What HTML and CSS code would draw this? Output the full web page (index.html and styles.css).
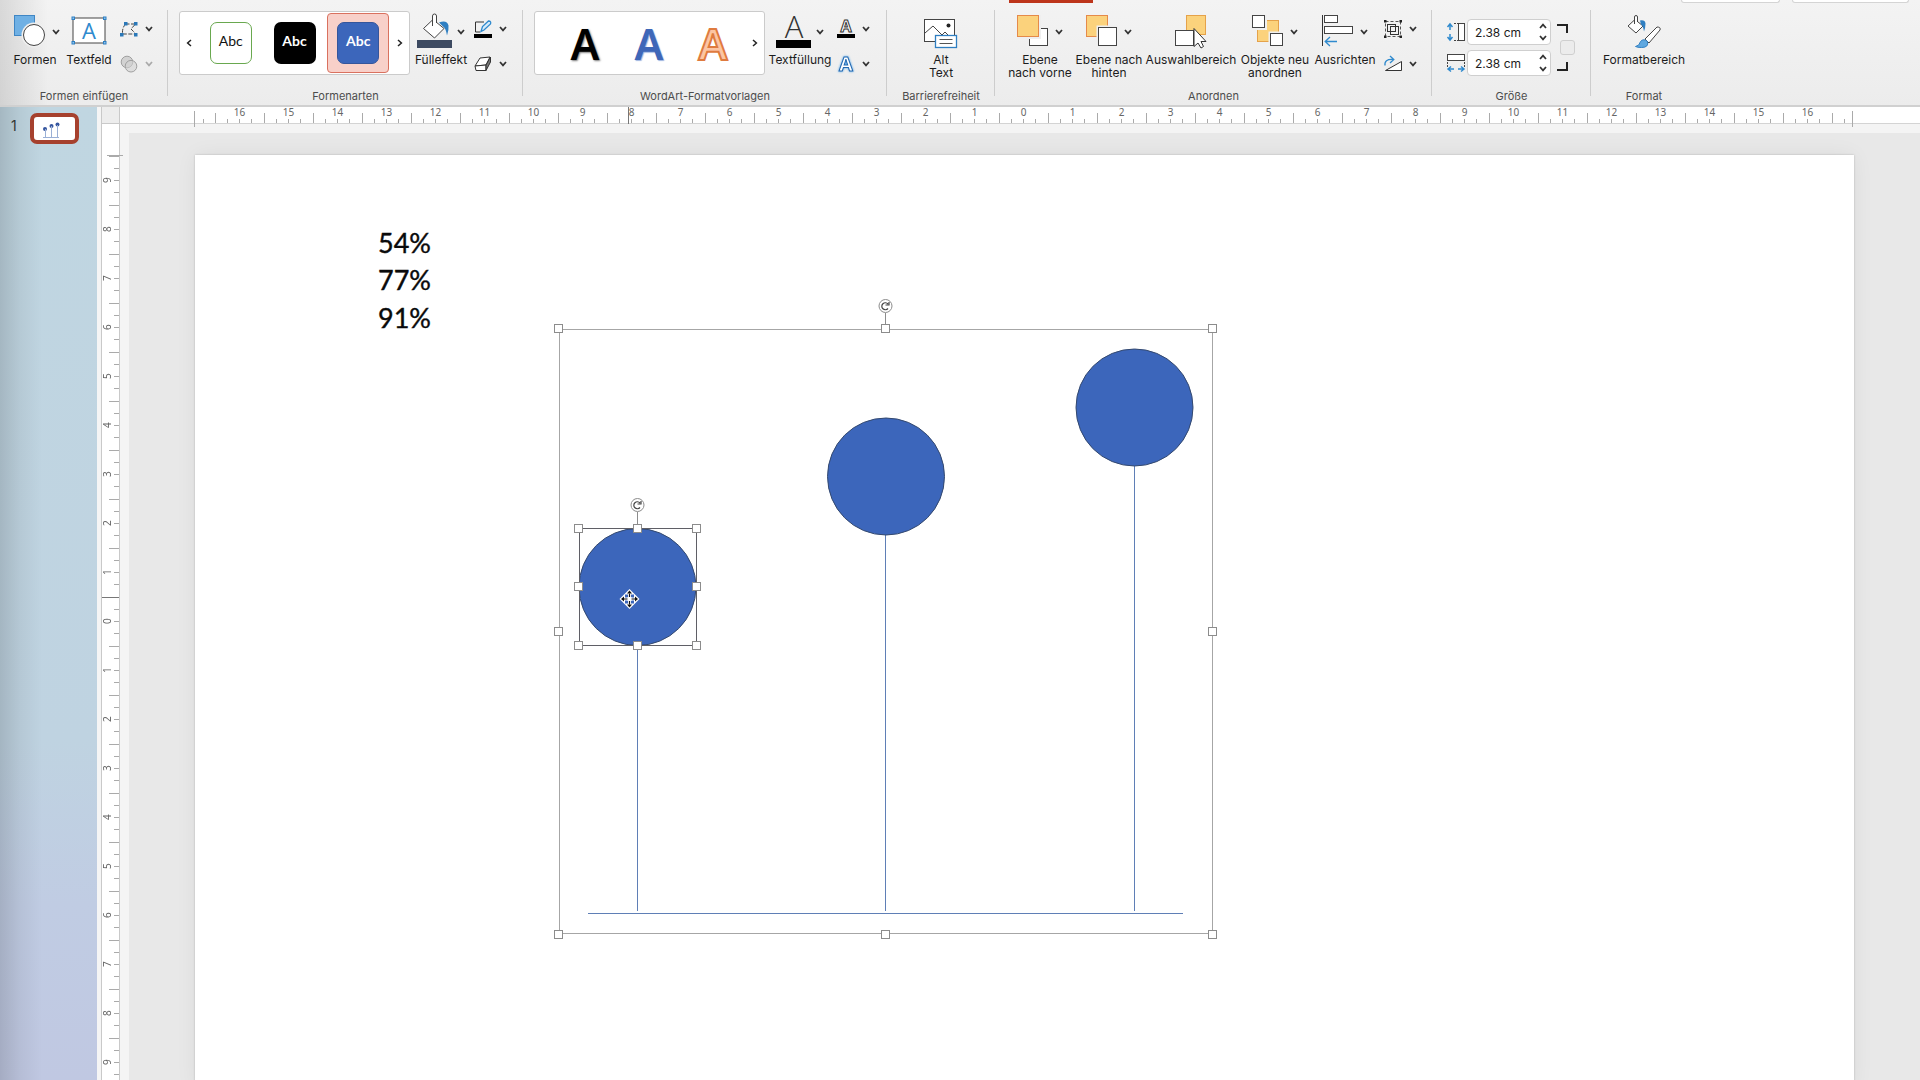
FILE: index.html
```
<!DOCTYPE html>
<html lang="de">
<head>
<meta charset="utf-8">
<title>Präsentation</title>
<link rel="stylesheet" href="styles.css">
</head>
<body>
<svg width="0" height="0" class="defs" aria-hidden="true">
  <symbol id="down" viewBox="0 0 8 6"><path d="M1 1l3 3.400 3-3.400" fill="none" stroke="currentColor" stroke-width="1.700"/></symbol>
  <symbol id="up" viewBox="0 0 8 6"><path d="M1 5l3-3.400 3 3.400" fill="none" stroke="currentColor" stroke-width="1.700"/></symbol>
  <symbol id="left" viewBox="0 0 6 8"><path d="M5 1l-3.400 3 3.400 3" fill="none" stroke="currentColor" stroke-width="1.500"/></symbol>
  <symbol id="right" viewBox="0 0 6 8"><path d="M1 1l3.400 3-3.400 3" fill="none" stroke="currentColor" stroke-width="1.500"/></symbol>
</svg>

<header class="ribbon">
  <div class="tab-mark"></div>
  <div class="top-fields"><span></span><span></span></div>

  <section class="group g-insert">
    <div class="tools">
      <button class="tool w50">
        <span class="pic end"><svg width="31" height="36"><rect x=".5" y="1.500" width="20" height="20" fill="#6fb0e4" stroke="#3f86c4"/><circle cx="20" cy="21" r="12.500" fill="#efefef"/><circle cx="20" cy="21" r="10.500" fill="#fff" stroke="#444"/></svg><svg class="chev"><use href="#down"/></svg></span>
        <span class="name">Formen</span>
      </button>
      <button class="tool w50">
        <span class="pic"><svg width="36" height="36"><rect x="2" y="4" width="32" height="25" fill="#fff" stroke="#444"/><g fill="#8cc4ee" stroke="#2f7fc2"><rect x="1" y="3" width="2.500" height="2.500"/><rect x="32.500" y="3" width="2.500" height="2.500"/><rect x="1" y="27.500" width="2.500" height="2.500"/><rect x="32.500" y="27.500" width="2.500" height="2.500"/></g><text x="18" y="24.500" class="t-box">A</text></svg></span>
        <span class="name">Textfeld</span>
      </button>
      <div class="minis">
        <button class="mini" aria-label="Form bearbeiten"><svg width="18" height="18"><path d="M5.500 4h10L11 9l5 5H2.500Q2 8 5.500 4" fill="none" stroke="#444" stroke-dasharray="4 1.500"/><g fill="#2b78b8"><rect x="4" y="2" width="3.500" height="3.500"/><rect x="14" y="2" width="3.500" height="3.500"/><rect x="0" y="13" width="3.500" height="3.500"/><rect x="14" y="13" width="3.500" height="3.500"/></g></svg><svg class="chev"><use href="#down"/></svg></button>
        <button class="mini" disabled aria-label="Formen zusammenführen"><svg width="18" height="18"><g fill="#d2d2d2" stroke="#a0a0a0"><circle cx="7" cy="7" r="5.800"/><circle cx="11" cy="11.200" r="5.800" fill="#d2d2d299"/></g></svg><svg class="chev"><use href="#down"/></svg></button>
      </div>
    </div>
    <h2>Formen einfügen</h2>
  </section>

  <section class="group g-styles">
    <div class="tools">
      <div class="gallery">
        <button class="arrow" aria-label="Zurück"><svg width="6" height="8"><use href="#left"/></svg></button>
        <button class="cell"><span class="swatch outline">Abc</span></button>
        <button class="cell"><span class="swatch black">Abc</span></button>
        <button class="cell selected"><span class="swatch blue">Abc</span></button>
        <button class="arrow" aria-label="Weiter"><svg width="6" height="8"><use href="#right"/></svg></button>
      </div>
      <button class="tool w54">
        <span class="pic tight"><svg width="36" height="36"><path d="M6.500 14.500L16 5.500l11 9-9.500 9.500z" fill="#fff" stroke="#444"/><path d="M15.500 12V2q0-2 2-2t2 2v7" fill="#fff" stroke="#444"/><path d="M22 8.500q8-3 9.500 3 .5 4-1.500 10-1-7-4-9z" fill="#2f7fc2"/><rect x="0" y="26" width="35" height="8" fill="#3d4a61"/></svg><svg class="chev"><use href="#down"/></svg></span>
        <span class="name">Fülleffekt</span>
      </button>
      <div class="minis">
        <button class="mini" aria-label="Formkontur"><svg width="18" height="18"><path d="M10 2H1.500v10" fill="none" stroke="#333"/><path d="M1.500 12H6" stroke="#333"/><path d="M7 11.500l1.500-5L14.500 1q3 0 2 3L10 10z" fill="#d7ebfa" stroke="#2f8ace" stroke-width="1.300"/><rect y="14" width="18" height="4" fill="#000"/></svg><svg class="chev"><use href="#down"/></svg></button>
        <button class="mini" aria-label="Formeffekte"><svg width="18" height="18"><path d="M1 11L6 3l10-1-4 8z" fill="#fff" stroke="#333"/><path d="M1 11l11-1v5.500H2z" fill="#fff" stroke="#333"/><path d="M12 10l4.500-8v5L12 15.500z" fill="#777" stroke="#333"/></svg><svg class="chev"><use href="#down"/></svg></button>
      </div>
    </div>
    <h2>Formenarten</h2>
  </section>

  <section class="group g-wordart">
    <div class="tools">
      <div class="gallery no-back">
        <button class="cell"><span class="art art-black">A</span></button>
        <button class="cell"><span class="art art-blue">A</span></button>
        <button class="cell"><span class="art art-orange">A</span></button>
        <button class="arrow" aria-label="Weiter"><svg width="6" height="8"><use href="#right"/></svg></button>
      </div>
      <button class="tool w62">
        <span class="pic tight"><svg width="36" height="36"><text x="18" y="24" class="t-fill">A</text><rect x="0" y="26" width="35" height="8" fill="#000"/></svg><svg class="chev"><use href="#down"/></svg></span>
        <span class="name">Textfüllung</span>
      </button>
      <div class="minis">
        <button class="mini" aria-label="Textkontur"><svg width="18" height="18"><text x="9" y="12" class="t-line">A</text><rect y="14" width="18" height="4" fill="#000"/></svg><svg class="chev"><use href="#down"/></svg></button>
        <button class="mini" aria-label="Texteffekte"><svg width="18" height="18"><text x="9" y="16" class="t-glow">A</text></svg><svg class="chev"><use href="#down"/></svg></button>
      </div>
    </div>
    <h2>WordArt-Formatvorlagen</h2>
  </section>

  <section class="group g-alt">
    <div class="tools">
      <button class="tool w62">
        <span class="pic"><svg width="34" height="36"><rect x=".5" y="5.500" width="30" height="22" fill="#fff" stroke="#444"/><path d="M1 19l8-7 9 9 3-3 4 4" fill="none" stroke="#444"/><circle cx="24.500" cy="11.500" r="2" fill="#222"/><rect x="11.500" y="21.500" width="21" height="12" fill="#fff" stroke="#2f7fc2" stroke-width="1.300"/><path d="M15.500 25.500h13M15.500 29.500h13" stroke="#555"/></svg></span>
        <span class="name">Alt<br>Text</span>
      </button>
    </div>
    <h2>Barrierefreiheit</h2>
  </section>

  <section class="group g-arrange">
    <div class="tools">
      <button class="tool w62">
        <span class="pic"><svg width="31" height="36"><rect x="12.500" y="14.500" width="18" height="17" fill="#fff" stroke="#444"/><rect x="0" y="1" width="24" height="24" fill="#efefef"/><rect x=".5" y="1.500" width="21" height="21" fill="#fbd27c" stroke="#e58a4a"/></svg><svg class="chev"><use href="#down"/></svg></span>
        <span class="name">Ebene<br>nach vorne</span>
      </button>
      <button class="tool w62">
        <span class="pic"><svg width="31" height="36"><rect x=".5" y="1.500" width="21" height="21" fill="#fbd27c" stroke="#e58a4a"/><rect x="10.500" y="11.500" width="21" height="22" fill="#efefef"/><rect x="12.500" y="13.500" width="18" height="18" fill="#fff" stroke="#444"/></svg><svg class="chev"><use href="#down"/></svg></span>
        <span class="name">Ebene nach<br>hinten</span>
      </button>
      <button class="tool w88">
        <span class="pic"><svg width="32" height="36"><rect x="11.500" y="1.500" width="19" height="19" fill="#fbd27c" stroke="#e5a24a"/><rect x=".5" y="16.500" width="18" height="15" fill="#fff" stroke="#444"/><path d="M19 14.500v18l4-3.500 3 5 2.500-1.500-2.500-5h5z" fill="#fff" stroke="#333"/></svg></span>
        <span class="name">Auswahlbereich</span>
      </button>
      <button class="tool w66">
        <span class="pic"><svg width="31" height="36"><rect x="5.500" y="6.500" width="21" height="21" fill="#fbd27c" stroke="#e5a24a"/><rect x="-1" y="1" width="16" height="15" fill="#efefef"/><rect x=".5" y="1.500" width="12" height="12" fill="#fff" stroke="#444"/><rect x="16.500" y="17.500" width="14" height="14" fill="#efefef"/><rect x="18.500" y="19.500" width="12" height="12" fill="#fff" stroke="#444"/></svg><svg class="chev"><use href="#down"/></svg></span>
        <span class="name">Objekte neu<br>anordnen</span>
      </button>
      <button class="tool w60">
        <span class="pic"><svg width="31" height="36"><path d="M.5 1v31" stroke="#333"/><rect x="2.500" y="1.500" width="13" height="7" fill="#fff" stroke="#444"/><rect x="2.500" y="12.500" width="28" height="7" fill="#fff" stroke="#444"/><path d="M15 27.500H3.500M8 23l-4.800 4.500L8 32" fill="none" stroke="#2f8ace" stroke-width="1.300"/></svg><svg class="chev"><use href="#down"/></svg></span>
        <span class="name">Ausrichten</span>
      </button>
      <div class="minis">
        <button class="mini" aria-label="Gruppieren"><svg width="18" height="18"><rect x="1.500" y="1.500" width="15" height="15" fill="none" stroke="#555" stroke-dasharray="3 2"/><rect x="3.500" y="4.500" width="8" height="7" fill="none" stroke="#333"/><rect x="6.500" y="6.500" width="8" height="8" fill="none" stroke="#333"/><path d="M0 0h2.500v2.500H0zM15.500 0H18v2.500h-2.500zM0 15.500h2.500V18H0zM15.500 15.500H18V18h-2.500z" fill="#222"/></svg><svg class="chev"><use href="#down"/></svg></button>
        <button class="mini" aria-label="Drehen"><svg width="18" height="18"><path d="M1.500 15.500h16v-9z" fill="#fff" stroke="#333"/><path d="M1 10.500Q0 4 9 4.500M6 1l3.800 3.500L6 8" fill="none" stroke="#2f8ace" stroke-width="1.300"/></svg><svg class="chev"><use href="#down"/></svg></button>
      </div>
    </div>
    <h2>Anordnen</h2>
  </section>

  <section class="group g-size">
    <div class="tools">
      <div class="sizes">
        <div class="size">
          <label for="h" aria-label="Höhe"><svg width="18" height="18"><path d="M3 1v6M.500 4L3 1l2.500 3M3 17v-6M.500 14L3 17l2.500-3" fill="none" stroke="#2f8ace" stroke-width="1.500"/><path d="M7 .500h5M7 17.500h5" stroke="#444" stroke-dasharray="2 1"/><rect x="11.500" y=".5" width="6" height="17" fill="#fff" stroke="#444"/></svg></label>
          <div class="spin"><input id="h" type="text" value="2.38 cm"><span class="steps"><button aria-label="Höher"><svg class="chev"><use href="#up"/></svg></button><button aria-label="Niedriger"><svg class="chev"><use href="#down"/></svg></button></span></div>
        </div>
        <div class="size">
          <label for="w" aria-label="Breite"><svg width="18" height="18"><rect x=".5" y=".5" width="17" height="6" fill="#fff" stroke="#444"/><path d="M.5 8v5M17.500 8v5" stroke="#444" stroke-dasharray="2 1"/><path d="M7 15H1M4 12.500L1 15l3 2.500M11 15h6M14 12.500l3 2.500-3 2.500" fill="none" stroke="#2f8ace" stroke-width="1.500"/></svg></label>
          <div class="spin"><input id="w" type="text" value="2.38 cm"><span class="steps"><button aria-label="Breiter"><svg class="chev"><use href="#up"/></svg></button><button aria-label="Schmaler"><svg class="chev"><use href="#down"/></svg></button></span></div>
        </div>
      </div>
      <div class="ratio">
        <svg width="11" height="9"><path d="M0 1h10v8" fill="none" stroke="#222" stroke-width="2"/></svg>
        <input type="checkbox" aria-label="Seitenverhältnis sperren">
        <svg width="11" height="9"><path d="M0 8h10V0" fill="none" stroke="#222" stroke-width="2"/></svg>
      </div>
    </div>
    <h2>Größe</h2>
  </section>

  <section class="group g-format">
    <div class="tools">
      <button class="tool w88">
        <span class="pic"><svg width="34" height="36"><path d="M1 12l7-6.500 8 6.500-7 7z" fill="#fff" stroke="#444"/><path d="M7.500 10V3q0-1.500 1.500-1.500T10.500 3v5" fill="#fff" stroke="#444"/><path d="M13 6.500q5-1 5.500 3 0 4-1.500 8-1-6-3-7z" fill="#2f7fc2"/><path d="M18 25L30 13q4 0 3 3L22 29z" fill="#fff" stroke="#444"/><path d="M8.500 32.500q4-.5 5-5 3-3.500 7 0 1.500 6-6 6-4 0-6-1z" fill="#5fa8e0" stroke="#2f7fc2"/></svg></span>
        <span class="name">Formatbereich</span>
      </button>
    </div>
    <h2>Format</h2>
  </section>
</header>

<main class="editor">
  <nav class="slides">
    <ol><li><a href="#slide"><span class="num">1</span><span class="thumb"><svg width="41" height="23"><g fill="#35559f"><circle cx="11" cy="12" r="2"/><circle cx="17.500" cy="9" r="2"/><circle cx="23.500" cy="7.500" r="2"/></g><path d="M11.500 12v8.500M17.500 9v11.500M23.500 8v12.500M9 20.500h16" stroke="#9ab0d6"/></svg></span></a></li></ol>
  </nav>
  <div class="corner"></div>
  <div class="ruler-h">
    <i class="pad"></i><span>16</span><span>15</span><span>14</span><span>13</span><span>12</span><span>11</span><span>10</span><span>9</span><span>8</span><span>7</span><span>6</span><span>5</span><span>4</span><span>3</span><span>2</span><span>1</span><span>0</span><span>1</span><span>2</span><span>3</span><span>4</span><span>5</span><span>6</span><span>7</span><span>8</span><span>9</span><span>10</span><span>11</span><span>12</span><span>13</span><span>14</span><span>15</span><span>16</span><i class="pad last"></i>
    <b class="pointer"></b>
  </div>
  <div class="ruler-v">
    <i class="pad"></i><span>9</span><span>8</span><span>7</span><span>6</span><span>5</span><span>4</span><span>3</span><span>2</span><span>1</span><span>0</span><span>1</span><span>2</span><span>3</span><span>4</span><span>5</span><span>6</span><span>7</span><span>8</span><span>9</span>
    <b class="pointer"></b>
  </div>
  <div class="workspace">
    <article class="slide" id="slide">
      <svg viewBox="0 0 1659 933">
        <defs>
          <rect id="handle" x="-4" y="-4" width="8" height="8" fill="#fff" stroke="#8c8c8c"/>
          <g id="turn"><path d="M0 7v12" stroke="#8c8c8c"/><circle r="6.500" fill="#fff" stroke="#8c8c8c"/><path d="M2.500 2.500A3.500 3.500 0 1 1 2.500-2M3.500-4v3H0" fill="none" stroke="#444" stroke-width="1.200"/></g>
        </defs>
        <g class="values"><text x="183" y="98">54%</text><text x="183" y="135">77%</text><text x="183" y="173">91%</text></g>
        <g class="stems"><path d="M442.500 432V756M690.500 321V756M939.500 252V756M393 758.500H988"/></g>
        <g class="dots"><circle cx="442.500" cy="432" r="58.500"/><circle cx="691" cy="321.500" r="58.500"/><circle cx="939.500" cy="252.500" r="58.500"/></g>
        <rect x="364.500" y="174.500" width="653" height="604" fill="none" stroke="#a6a6a6"/>
        <rect x="384.500" y="373.500" width="117" height="117" fill="none" stroke="#5f5f66"/>
        <use href="#turn" x="690.500" y="151"/><use href="#turn" x="442.500" y="350"/>
        <use href="#handle" x="363.500" y="173.500"/><use href="#handle" x="690.500" y="173.500"/><use href="#handle" x="1017.500" y="173.500"/>
        <use href="#handle" x="363.500" y="476.500"/><use href="#handle" x="1017.500" y="476.500"/>
        <use href="#handle" x="363.500" y="779.500"/><use href="#handle" x="690.500" y="779.500"/><use href="#handle" x="1017.500" y="779.500"/>
        <use href="#handle" x="383.500" y="373.500"/><use href="#handle" x="442.500" y="373.500"/><use href="#handle" x="501.500" y="373.500"/>
        <use href="#handle" x="383.500" y="431.500"/><use href="#handle" x="501.500" y="431.500"/>
        <use href="#handle" x="383.500" y="490.500"/><use href="#handle" x="442.500" y="490.500"/><use href="#handle" x="501.500" y="490.500"/>
        <g transform="translate(434.500 444)"><path d="M0-10L10 0 0 10-10 0z" fill="#fff"/><path d="M0-5.500v11M-5.500 0h11" stroke="#111" stroke-width="1.200"/><path d="M0-8.500l2.500 3h-5zM0 8.500l2.500-3h-5zM-8.500 0l3-2.500v5zM8.500 0l-3-2.500v5z" fill="#111"/><path d="M-4.500-4.500h3v3h-3zM1.500-4.500h3v3h-3zM-4.500 1.500h3v3h-3zM1.500 1.500h3v3h-3z" fill="#3c66bb"/><rect x="-2" y="-2" width="4" height="4" fill="#fff"/></g>
      </svg>
    </article>
  </div>
</main>
</body>
</html>
```
FILE: styles.css
```
* { box-sizing: border-box; }
body {
  margin: 0;
  height: 100vh;
  overflow: hidden;
  display: flex;
  flex-direction: column;
  background: #e8e8e8;
  color: #1c1c1c;
  font-family: Inter, "Liberation Sans", sans-serif;
  font-size: 12px;
}
button, input { font: inherit; color: inherit; }
button { padding: 0; border: 0; background: none; }
svg { display: block; flex: none; overflow: visible; }
.defs { position: absolute; }
.chev { width: 8px; height: 6px; color: #333; }

/* Ribbon */
.ribbon {
  position: relative;
  display: flex;
  flex: none;
  height: 107px;
  padding-top: 10px;
  border-bottom: 2px solid #d0d0d0;
  background: linear-gradient(90deg, #0000001c, #0000 48px), linear-gradient(#f3f3f3, #ececec);
}
.tab-mark { position: absolute; top: 0; left: 1009px; width: 84px; height: 3px; background: #bd351b; }
.top-fields { position: absolute; top: 0; right: 11px; display: flex; gap: 12px; }
.top-fields span { width: 117px; height: 3px; background: #fff; border: 1px solid #d4d4d4; border-top: 0; border-radius: 0 0 4px 4px; }
.top-fields span:first-child { width: 99px; }

.group { position: relative; display: flex; flex-direction: column; flex: none; }
.group:not(:last-child)::after { content: ""; position: absolute; top: 0; right: 0; width: 1px; height: 86px; background: #cdcdcd; }
.group h2 { margin: 0; font-size: 11px; font-weight: 400; line-height: 16px; text-align: center; color: #4c4c4c; white-space: nowrap; }
.tools { display: flex; height: 78px; }
.g-insert { width: 168px; }
.g-insert .tools { padding-left: 10px; gap: 4px; }
.g-styles { width: 355px; }
.g-styles .tools { padding-left: 11px; gap: 4px; }
.g-wordart { width: 364px; }
.g-wordart .tools { padding-left: 11px; gap: 4px; }
.g-alt { width: 108px; }
.g-alt .tools { justify-content: center; }
.g-arrange { width: 437px; }
.g-arrange .tools { padding-left: 14px; gap: 7px; }
.g-size { width: 159px; }
.g-size .tools { padding-left: 15px; gap: 6px; }
.g-format { width: 106px; }
.g-format .tools { justify-content: center; }

.tool { display: flex; flex-direction: column; align-items: center; padding-top: 4px; }
.pic { display: flex; align-items: center; justify-content: center; gap: 7px; width: 100%; height: 36px; }
.pic.end { justify-content: flex-end; }
.pic.tight { gap: 4px; }
.name { padding-top: 3px; line-height: 13px; white-space: nowrap; }
.w50 { width: 50px; }
.w54 { width: 54px; }
.w60 { width: 60px; }
.w62 { width: 62px; }
.w66 { width: 66px; }
.w88 { width: 88px; }

.minis { display: flex; flex-direction: column; gap: 17px; padding: 10px 2px 0; }
.mini { display: flex; align-items: center; gap: 7px; height: 18px; }
.mini:disabled .chev { color: #aaa; }

.gallery { display: flex; gap: 2px; width: 231px; height: 64px; margin-top: 1px; padding: 1px 0; background: #fff; border: 1px solid #cbcbcb; border-radius: 3px; }
.gallery.no-back { padding-left: 19px; }
.arrow { display: grid; place-items: center; width: 18px; color: #222; }
.no-back .arrow { margin-left: auto; }
.cell { display: grid; place-items: center; width: 62px; height: 60px; border: 1px solid transparent; border-radius: 4px; }
.cell.selected { background: #f8d0c9; border-color: #d9715f; }
.swatch { width: 42px; height: 42px; border-radius: 7px; font: 700 14px/38px Lato, sans-serif; color: #fff; }
.swatch.outline { border: 1px solid #69a84f; color: #111; font-weight: 400; line-height: 36px; }
.swatch.black { background: #000; }
.swatch.blue { background: #3c66bb; border: 1px solid #35559b; line-height: 36px; }
.art { font: 600 43px/60px "Noto Sans", sans-serif; height: 58px; }
.art-black { color: #000; text-shadow: 1px 1px 2px #0008; }
.art-blue { color: #3f67b8; text-shadow: 1px 1px 1px #9db4e0; }
.art-orange { color: #fcc5a3; -webkit-text-stroke: 2px #df7b3f; }

.t-box { font: 400 22px "Open Sans", sans-serif; fill: #2f8ace; text-anchor: middle; }
.t-fill { font: 300 31px "Open Sans", sans-serif; fill: #333; text-anchor: middle; }
.t-line { font: 700 16px "Noto Sans", sans-serif; fill: #fff; stroke: #333; text-anchor: middle; }
.t-glow { font: 700 20px "Noto Sans", sans-serif; fill: #fff; stroke: #2468b0; stroke-width: 1px; text-anchor: middle; filter: drop-shadow(0 0 1px #4aa3ea); }

.sizes { display: flex; flex-direction: column; gap: 5px; padding-top: 9px; }
.size { display: flex; align-items: center; gap: 2px; }
.spin { display: flex; width: 84px; height: 26px; background: #fff; border: 1px solid #cfcfcf; border-radius: 4px; }
.spin input { flex: 1; min-width: 0; padding: 0 0 0 7px; border: 0; background: none; font-size: 12px; outline: 0; }
.steps { display: flex; flex-direction: column; justify-content: space-around; padding-right: 3px; }
.ratio { display: flex; flex-direction: column; gap: 7px; padding-top: 14px; }
.ratio input { appearance: none; width: 15px; height: 15px; margin: 0 0 0 3px; background: #ececec; border: 1px solid #cfcfcf; border-radius: 3px; }

/* Editor */
.editor { flex: 1; min-height: 0; display: grid; grid-template-columns: 101px 19px minmax(0, 1fr); grid-template-rows: 17px minmax(0, 1fr); }
.slides {
  grid-row: 1 / 3;
  border-right: 4px solid #f5f5f5;
  background: linear-gradient(90deg, #00000024, #0000000e 20px, #0000 42px), linear-gradient(#c0d6e1, #bfd3e1 65%, #c0cce3 82%, #c0c8e2);
}
.slides ol { margin: 0; padding: 6px 0 0 11px; list-style: none; }
.slides a { display: flex; gap: 10px; color: #333; text-decoration: none; }
.num { width: 9px; font-size: 14px; line-height: 26px; }
.thumb { width: 49px; height: 31px; border: 4px solid #a6412e; border-radius: 7px; background: #fff; }
.corner { border: solid #c9c9c9; border-width: 0 1px 1px; background: #ededed; }

.ruler-h, .ruler-v { position: relative; display: flex; background-color: #fff; color: #666; font: 10px/10px "Noto Sans", sans-serif; }
.ruler-h { padding: 0 67px 0 74px; border-bottom: 1px solid #d4d4d4; }
.ruler-h span, .ruler-h .pad {
  background-image: linear-gradient(#aaa, #aaa), linear-gradient(#aaa, #aaa), linear-gradient(#aaa, #aaa), linear-gradient(#aaa, #aaa);
  background-repeat: no-repeat;
  background-position: 0 100%, 25% 100%, 50% 100%, 75% 100%;
  background-size: 1px 10px, 1px 4px, 1px 4px, 1px 4px;
}
.ruler-h span { flex: 49 0 0; min-width: 0; text-align: center; }
.ruler-h .pad { position: relative; flex: 21 0 0; background-image: linear-gradient(#aaa, #aaa); background-position: 45% 100%; background-size: 1px 4px; }
.ruler-h .last { background-image: linear-gradient(#aaa, #aaa), linear-gradient(#aaa, #aaa); background-position: 0 100%, 60% 100%; background-size: 1px 10px, 1px 4px; }
.ruler-h .pad::after { content: ""; position: absolute; z-index: 1; top: 4px; left: 0; width: 1px; height: 16px; background: #aaa; }
.ruler-h .last::after { left: auto; right: 0; }
.ruler-h .pointer { position: absolute; left: 508px; top: 0; width: 1px; height: 17px; background: #777; }

.ruler-v { flex-direction: column; padding-top: 31px; border: solid #c9c9c9; border-width: 0 1px; }
.ruler-v span {
  flex: none;
  width: 17px;
  height: 49px;
  writing-mode: vertical-rl;
  transform: rotate(180deg);
  text-align: center;
  background-image: linear-gradient(#aaa, #aaa), linear-gradient(#aaa, #aaa), linear-gradient(#aaa, #aaa), linear-gradient(#aaa, #aaa);
  background-repeat: no-repeat;
  background-position: 0 100%, 0 25%, 0 50%, 0 75%;
  background-size: 10px 1px, 5px 1px, 5px 1px, 5px 1px;
}
.ruler-v .pad { position: relative; flex: none; height: 1px; }
.ruler-v .pad::after { content: ""; position: absolute; z-index: 1; left: 5px; width: 16px; height: 1px; background: #aaa; }
.ruler-v .pointer { position: absolute; top: 473px; left: 0; width: 17px; height: 1px; background: #777; }

.workspace { overflow: hidden; border: solid #f4f4f4; border-width: 9px 0 0 9px; padding: 22px 66px 0; }
.slide { background: #fff; box-shadow: 0 0 2px #0003, 0 0 20px #0000000f; }
.slide svg { width: 100%; }
.values { font: 27px Lato, sans-serif; fill: #0a0a0a; stroke: #0a0a0a; stroke-width: .4px; }
.stems { fill: none; stroke: #5f7fb6; }
.dots { fill: #3c66bb; stroke: #34496f; }
```
